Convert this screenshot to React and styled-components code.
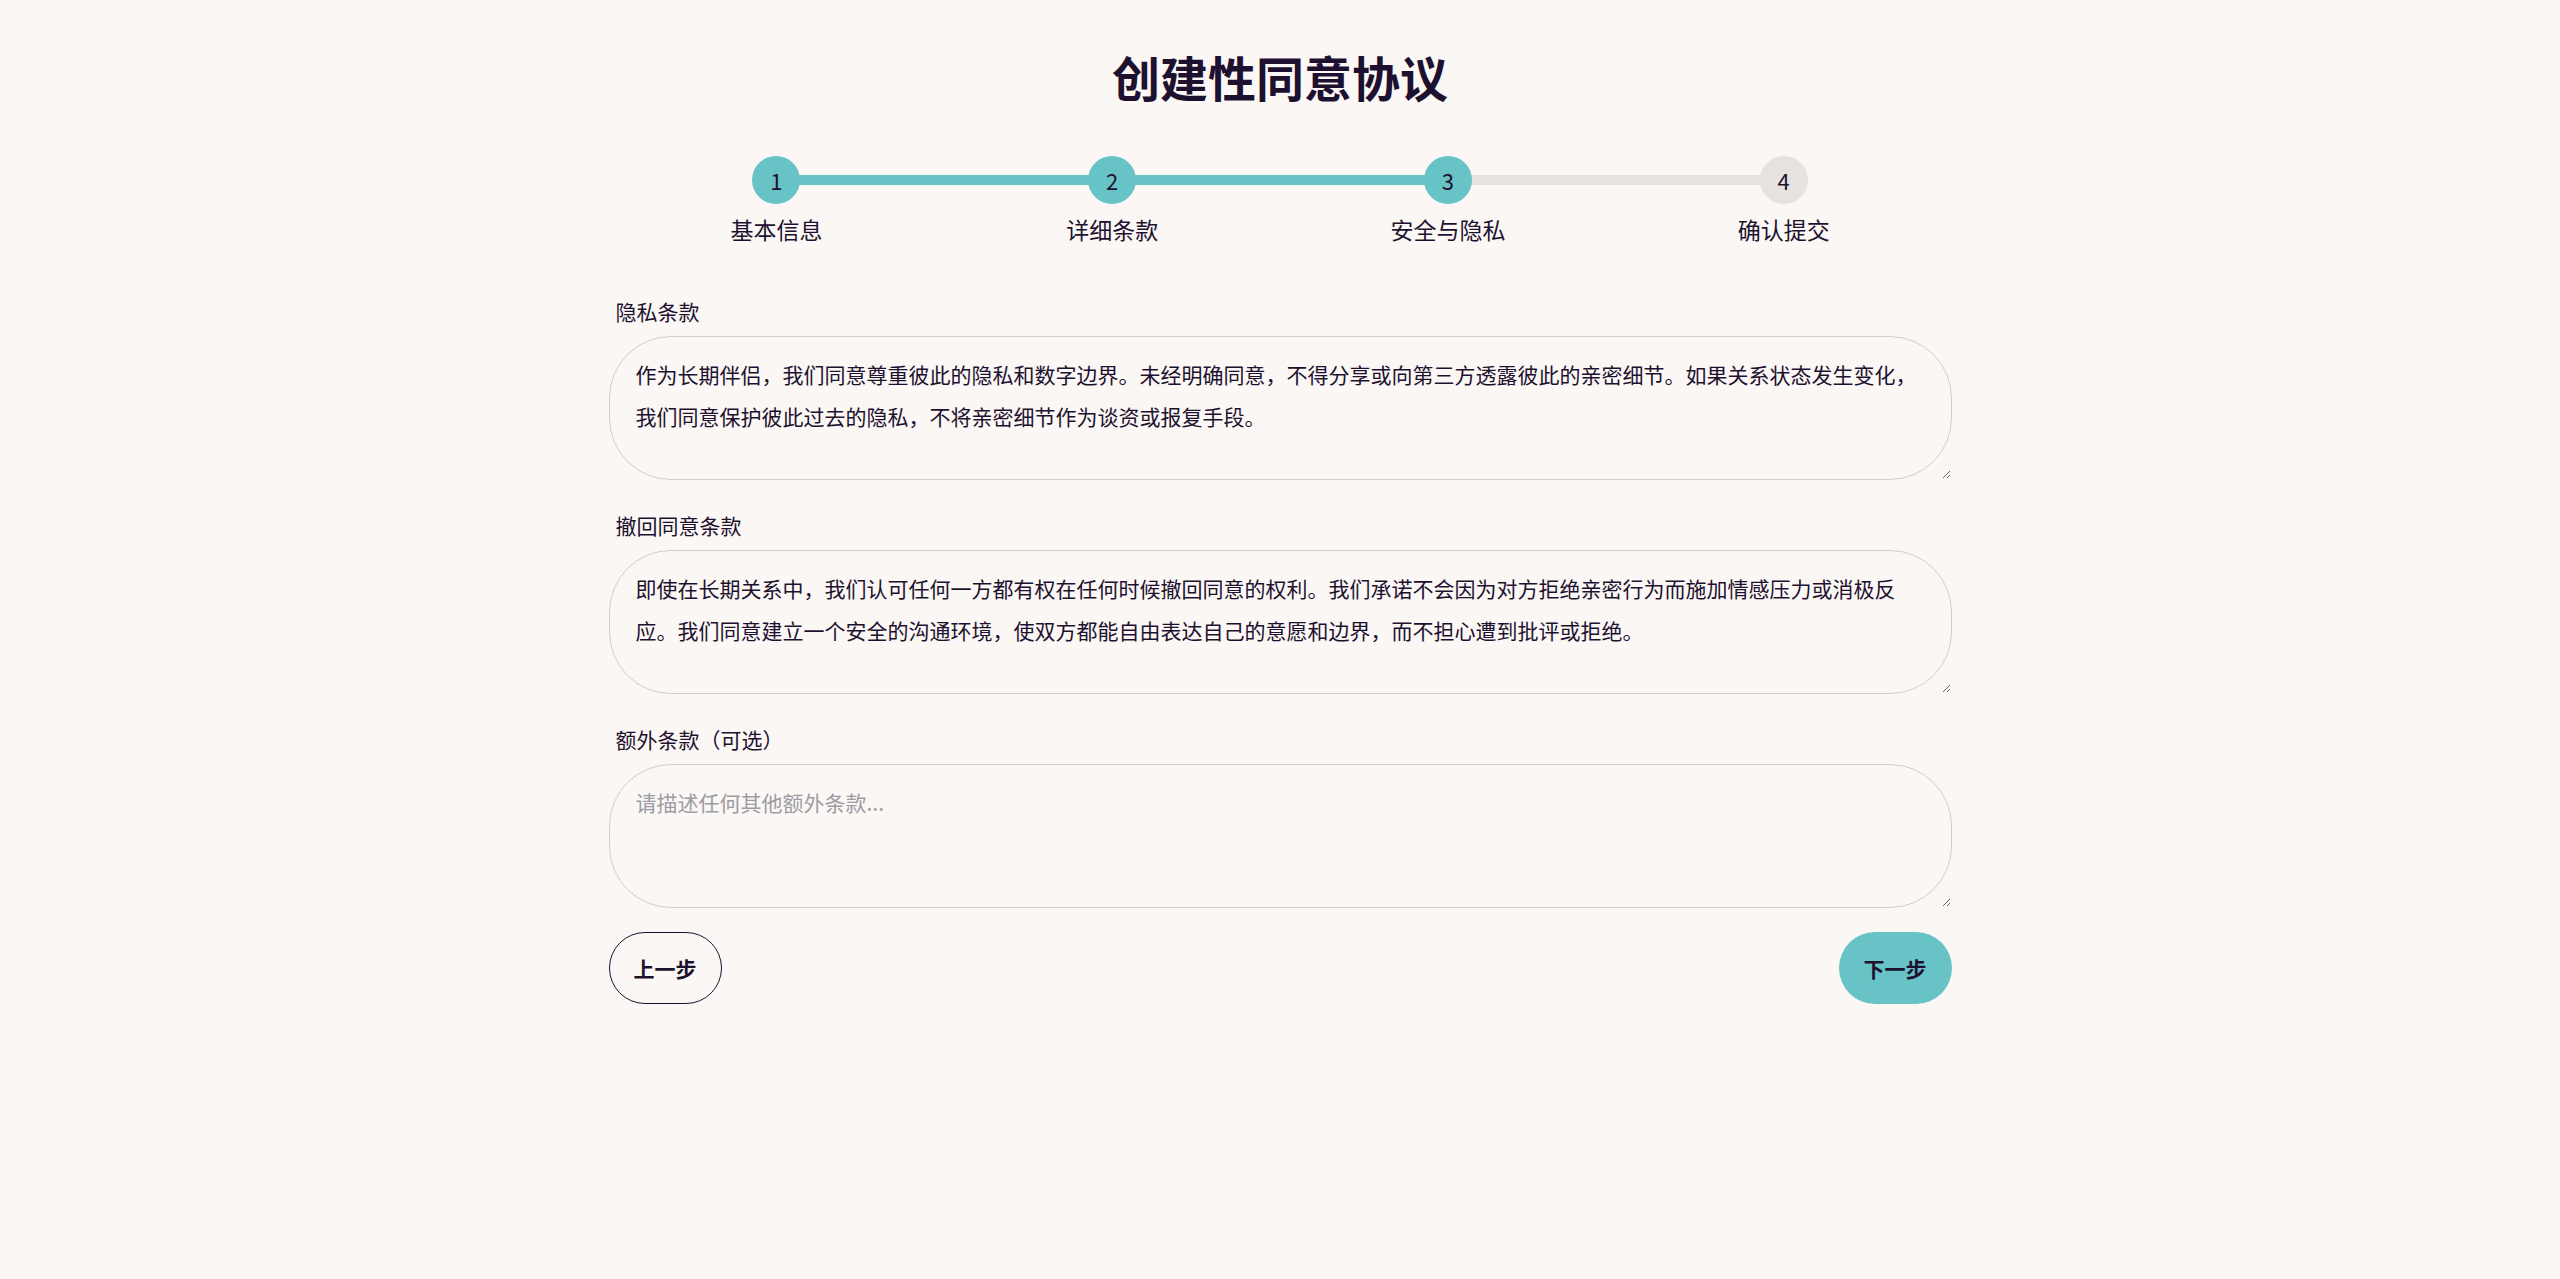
import React from 'react'
import styled, { createGlobalStyle } from 'styled-components'

const GlobalStyle = createGlobalStyle`
  body {
    margin: 0;
    background: #faf7f4;
    color: #1e1130;
    font-family: "Noto Sans CJK SC", "Noto Sans", sans-serif;
  }
`

const Page = styled.div`
  width: 1343px;
  margin: 0 auto;
  padding-top: 46px;
`

const Title = styled.h1`
  margin: 0;
  text-align: center;
  font-size: 48px;
  line-height: 60px;
  font-weight: 700;
`

const Stepper = styled.div`
  display: grid;
  grid-template-columns: repeat(4, 1fr);
  margin-top: 50px;
`

const Step = styled.div`
  position: relative;
  display: flex;
  flex-direction: column;
  align-items: center;
  &:not(:last-child)::after {
    content: "";
    position: absolute;
    left: 50%;
    width: 100%;
    top: 19px;
    height: 10px;
    background: ${p => (p.$lineDone ? '#67c3c6' : '#e6e2df')};
  }
`

const Circle = styled.div`
  position: relative;
  z-index: 1;
  width: 48px;
  height: 48px;
  border-radius: 50%;
  background: ${p => (p.$done ? '#67c3c6' : '#e6e2df')};
  display: flex;
  align-items: center;
  justify-content: center;
  font-size: 22px;
`

const StepLabel = styled.div`
  margin-top: 8px;
  font-size: 23px;
  line-height: 34px;
`

const Form = styled.div`
  margin-top: 50px;
  display: flex;
  flex-direction: column;
`

const Field = styled.div`
  display: flex;
  flex-direction: column;
  margin-bottom: 30px;
`

const Label = styled.label`
  font-size: 21px;
  line-height: 30px;
  padding-left: 7px;
  margin-bottom: 10px;
`

const Area = styled.textarea`
  box-sizing: border-box;
  height: 144px;
  border: 1.5px solid #d2cdcd;
  border-radius: 62px;
  background: transparent;
  padding: 16px 26px;
  font-family: inherit;
  font-size: 21px;
  line-height: 42px;
  color: #1e1130;
  resize: vertical;
  outline: none;
  &::placeholder {
    color: #9d9ba3;
  }
`

const Actions = styled.div`
  display: flex;
  justify-content: space-between;
  margin-top: -6px;
`

const Button = styled.button`
  width: 113px;
  height: 72px;
  border-radius: 36px;
  border: ${p => (p.$primary ? 'none' : '1.5px solid #1e1130')};
  background: ${p => (p.$primary ? '#67c3c6' : 'transparent')};
  color: #1e1130;
  font-family: inherit;
  font-weight: 700;
  font-size: 21px;
`

const steps = ['基本信息', '详细条款', '安全与隐私', '确认提交']
const current = 3

const fields = [
  {
    label: '隐私条款',
    value: '作为长期伴侣，我们同意尊重彼此的隐私和数字边界。未经明确同意，不得分享或向第三方透露彼此的亲密细节。如果关系状态发生变化，我们同意保护彼此过去的隐私，不将亲密细节作为谈资或报复手段。',
  },
  {
    label: '撤回同意条款',
    value: '即使在长期关系中，我们认可任何一方都有权在任何时候撤回同意的权利。我们承诺不会因为对方拒绝亲密行为而施加情感压力或消极反应。我们同意建立一个安全的沟通环境，使双方都能自由表达自己的意愿和边界，而不担心遭到批评或拒绝。',
  },
  { label: '额外条款（可选）', value: '', placeholder: '请描述任何其他额外条款...' },
]

export default function App() {
  return (
    <Page>
      <GlobalStyle />
      <Title>创建性同意协议</Title>
      <Stepper>
        {steps.map((s, i) => (
          <Step key={s} $lineDone={i + 2 <= current}>
            <Circle $done={i + 1 <= current}>{i + 1}</Circle>
            <StepLabel>{s}</StepLabel>
          </Step>
        ))}
      </Stepper>
      <Form>
        {fields.map(f => (
          <Field key={f.label}>
            <Label>{f.label}</Label>
            <Area defaultValue={f.value} placeholder={f.placeholder} />
          </Field>
        ))}
        <Actions>
          <Button>上一步</Button>
          <Button $primary>下一步</Button>
        </Actions>
      </Form>
    </Page>
  )
}
